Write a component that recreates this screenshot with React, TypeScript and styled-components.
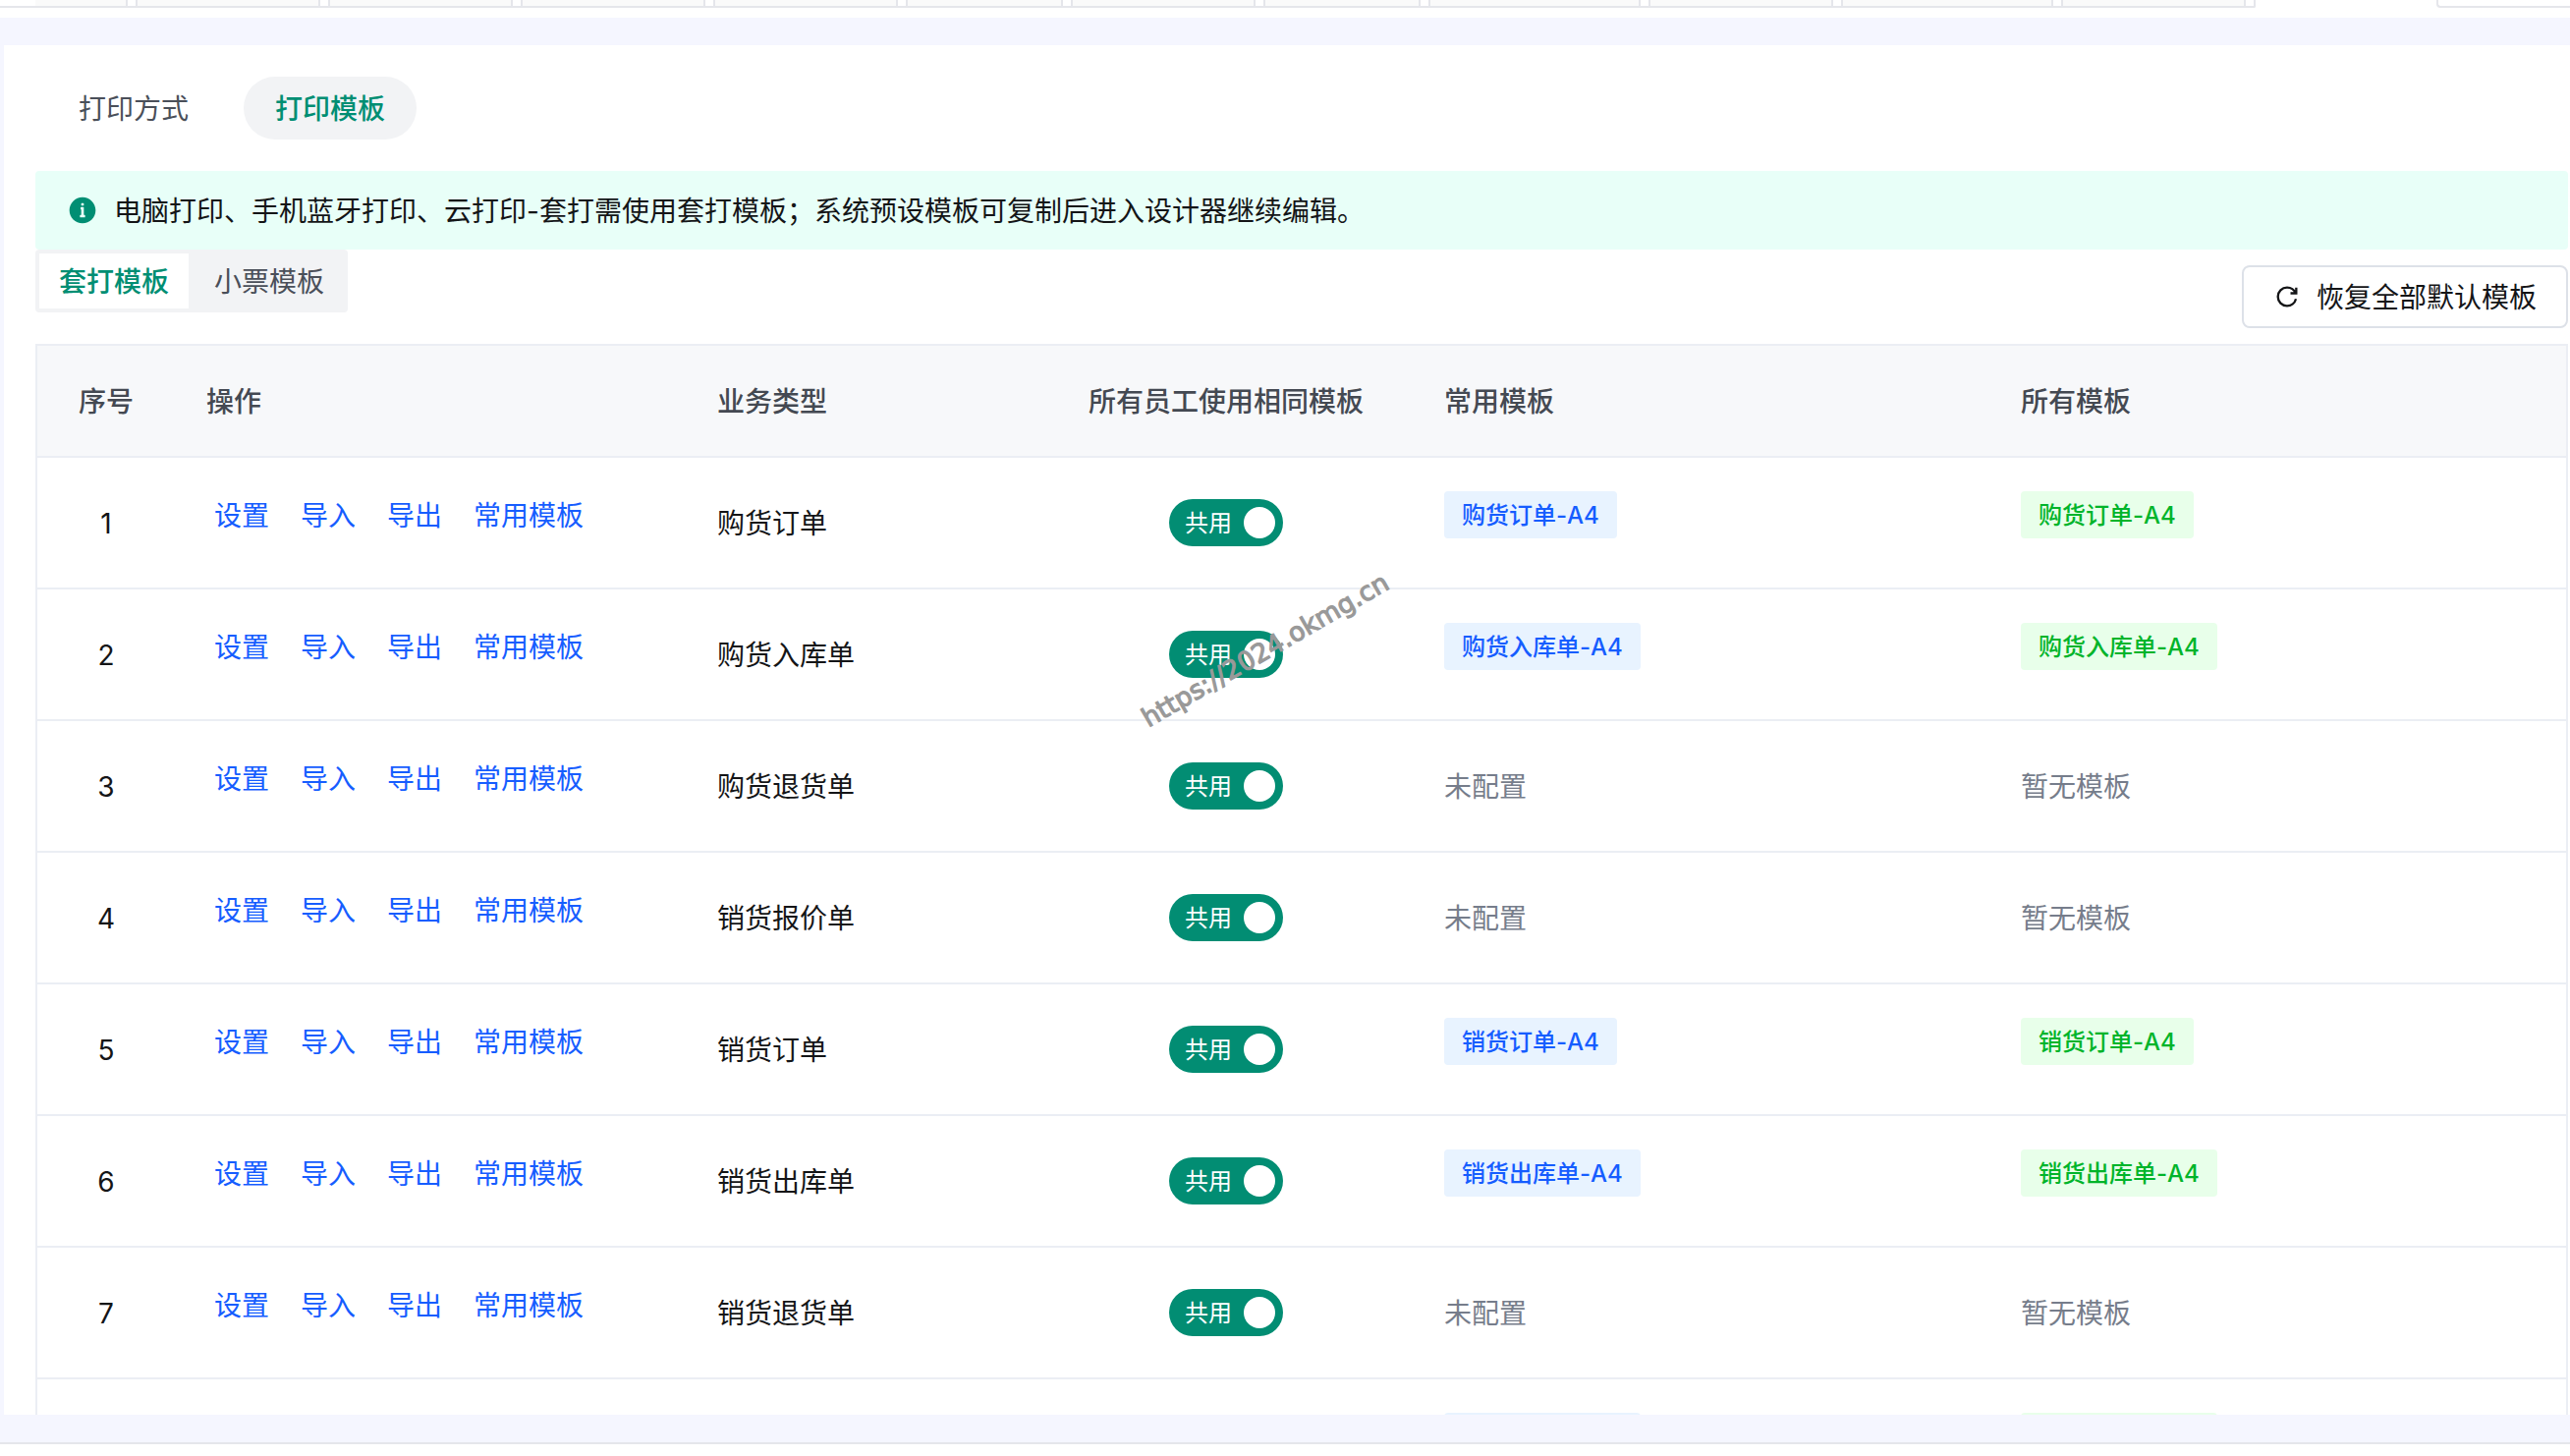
import React from "react";
import styled, { createGlobalStyle, css } from "styled-components";

const GlobalStyle = createGlobalStyle`
  * { box-sizing: border-box; }
  html, body { margin: 0; padding: 0; background: #fff; }
  body {
    font-family: Inter, "Noto Sans CJK SC", sans-serif;
    font-size: 28px;
    line-height: 44px;
    color: #141517;
    overflow: hidden;
  }
`;

const Page = styled.div`
  width: 2616px;
  height: 1482px;
  display: flex;
  flex-direction: column;
  overflow: hidden;
  background: #fff;
`;

const TopStrip = styled.div`
  height: 18px;
  flex: none;
  display: flex;
  align-items: flex-start;
`;

const TabBar = styled.div`
  width: 2296px;
  height: 8px;
  display: flex;
  gap: 8px;
  padding-left: 36px;
  border-bottom: 2px solid #e5e6eb;
  border-right: 2px solid #e5e6eb;
  border-bottom-right-radius: 2px;
`;

const OpenTab = styled.div<{ $width: number; $first?: boolean }>`
  width: ${(p) => p.$width}px;
  height: 6px;
  background: #fafafa;
  border-right: 2px solid #e5e6eb;
  border-left: ${(p) => (p.$first ? "none" : "2px solid #e5e6eb")};
`;

const TabTools = styled.div`
  margin-left: auto;
  width: 136px;
  height: 8px;
  border-left: 2px solid #e5e6eb;
  border-bottom: 2px solid #e5e6eb;
  border-bottom-left-radius: 4px;
`;

const Workspace = styled.main`
  height: 1450px;
  flex: none;
  padding: 28px 0 28px 4px;
  background: #f5f6ff;
`;

const Panel = styled.section`
  height: 1394px;
  overflow: hidden;
  background: #fff;
  padding: 32px 2px 0 32px;
`;

const PillTabs = styled.nav`
  display: flex;
  gap: 24px;
  padding-left: 12px;
`;

const Pill = styled.div<{ $active?: boolean }>`
  height: 64px;
  line-height: 66px;
  padding: 0 32px;
  border-radius: 32px;
  color: ${(p) => (p.$active ? "#008e73" : "#4a4f59")};
  font-weight: ${(p) => (p.$active ? 500 : 400)};
  background: ${(p) => (p.$active ? "#f2f3f5" : "transparent")};
`;

const Notice = styled.div`
  margin-top: 32px;
  height: 80px;
  padding: 0 32px;
  display: flex;
  align-items: center;
  gap: 16px;
  border-radius: 4px;
  background: #e8fff8;
`;

const Label = styled.span`
  padding-top: 2px;
`;

const Toolbar = styled.div`
  display: flex;
  align-items: flex-start;
  justify-content: space-between;
  height: 96px;
`;

const Segments = styled.div`
  display: flex;
  gap: 6px;
  height: 64px;
  padding: 4px;
  border-radius: 4px;
  background: #f2f3f5;
`;

const Segment = styled.div<{ $active?: boolean }>`
  height: 56px;
  line-height: 58px;
  padding: 0 20px;
  ${(p) =>
    p.$active
      ? css`
          color: #008e73;
          font-weight: 500;
          background: #fff;
        `
      : css`
          color: #4a4f59;
        `}
`;

const ResetButton = styled.button`
  margin: 16px 0 0;
  height: 64px;
  padding: 0 30px;
  display: flex;
  align-items: center;
  gap: 16px;
  border: 2px solid #dde1e8;
  border-radius: 8px;
  background: #fff;
  color: #141517;
  font: inherit;
`;

const Table = styled.div`
  border: 2px solid #ebeef4;
`;

const gridColumns = css`
  display: grid;
  grid-template-columns: 140px 520px 378px 394px 587px 1fr;
`;

const HeadRow = styled.div`
  ${gridColumns}
  height: 114px;
  align-items: center;
  background: #f7f8fa;
  border-bottom: 2px solid #ebeef4;
  color: #444952;
  font-weight: 500;
`;

const Row = styled.div`
  ${gridColumns}
  height: 134px;
  border-bottom: 2px solid #ebeef4;
`;

const Cell = styled.div<{ $center?: boolean; $indent?: number }>`
  display: flex;
  align-items: center;
  justify-content: ${(p) => (p.$center ? "center" : "flex-start")};
  padding-left: ${(p) => p.$indent ?? 0}px;
  white-space: nowrap;
`;

const TextCell = styled(Cell)`
  padding-top: 2px;
`;

const LinkCell = styled(Cell)`
  align-items: flex-start;
  gap: 32px;
  padding: 37px 0 0 40px;
`;

const ActionLink = styled.a`
  color: #165dff;
`;

const TagCell = styled(Cell)`
  align-items: flex-start;
  padding-top: 34px;
`;

const Tag = styled.span<{ $tone: "blue" | "green" }>`
  height: 48px;
  line-height: 50px;
  min-width: 176px;
  padding: 0 18px;
  border-radius: 4px;
  font-size: 24px;
  font-weight: 500;
  color: ${(p) => (p.$tone === "blue" ? "#165dff" : "#00b42a")};
  background: ${(p) => (p.$tone === "blue" ? "#e8f3ff" : "#e8ffea")};
`;

const TagPlaceholder = styled(Tag)`
  width: 200px;
`;

const Muted = styled.span`
  color: #767d8b;
`;

const Toggle = styled.div`
  width: 116px;
  height: 48px;
  padding: 0 8px 0 16px;
  display: flex;
  align-items: center;
  justify-content: space-between;
  border-radius: 24px;
  background: #028d73;
  color: #fff;
  font-size: 24px;
`;

const Knob = styled.span`
  width: 32px;
  height: 32px;
  border-radius: 50%;
  background: #fff;
`;

const Footer = styled.div`
  flex: 1;
  border-top: 2px solid #e5e6eb;
`;

const Watermark = styled.div`
  position: absolute;
  left: 1288px;
  top: 662px;
  transform: translate(-50%, -50%) rotate(-30deg);
  font-family: "DejaVu Sans", sans-serif;
  font-size: 26.5px;
  line-height: 1;
  color: #999;
  -webkit-text-stroke: 1.2px #999;
  white-space: nowrap;
`;

const InfoIcon = () => (
  <svg width="32" height="32" viewBox="0 0 48 48">
    <path
      fill="#008e73"
      fillRule="evenodd"
      d="M24 44c11.046 0 20-8.954 20-20S35.046 4 24 4 4 12.954 4 24s8.954 20 20 20Zm2-30a1 1 0 0 0-1-1h-2a1 1 0 0 0-1 1v2a1 1 0 0 0 1 1h2a1 1 0 0 0 1-1v-2Zm0 17h1a1 1 0 0 1 1 1v2a1 1 0 0 1-1 1h-6a1 1 0 0 1-1-1v-2a1 1 0 0 1 1-1h1v-8a1 1 0 0 1-1-1v-2a1 1 0 0 1 1-1h3a1 1 0 0 1 1 1v11Z"
    />
  </svg>
);

const RefreshIcon = () => (
  <svg width="28" height="28" viewBox="0 0 48 48" fill="none" stroke="currentColor" strokeWidth="4">
    <path d="M38.837 18C36.463 12.136 30.715 8 24 8 15.163 8 8 15.163 8 24s7.163 16 16 16c7.455 0 13.72-5.1 15.496-12M40 8v10H30" />
  </svg>
);

const openTabs = [94, 188, 188, 188, 188, 160, 188, 160, 216, 188, 216, 188];
const actions = ["设置", "导入", "导出", "常用模板"];
const rows = [
  { type: "购货订单", template: true },
  { type: "购货入库单", template: true },
  { type: "购货退货单", template: false },
  { type: "销货报价单", template: false },
  { type: "销货订单", template: true },
  { type: "销货出库单", template: true },
  { type: "销货退货单", template: false },
];

export default function App() {
  return (
    <Page>
      <GlobalStyle />
      <TopStrip>
        <TabBar>
          {openTabs.map((width, i) => (
            <OpenTab key={i} $width={width} $first={i === 0} />
          ))}
        </TabBar>
        <TabTools />
      </TopStrip>
      <Workspace>
        <Panel>
          <PillTabs>
            <Pill>打印方式</Pill>
            <Pill $active>打印模板</Pill>
          </PillTabs>
          <Notice>
            <InfoIcon />
            <Label>
              电脑打印、手机蓝牙打印、云打印-套打需使用套打模板；系统预设模板可复制后进入设计器继续编辑。
            </Label>
          </Notice>
          <Toolbar>
            <Segments>
              <Segment $active>套打模板</Segment>
              <Segment>小票模板</Segment>
            </Segments>
            <ResetButton>
              <RefreshIcon />
              <Label>恢复全部默认模板</Label>
            </ResetButton>
          </Toolbar>
          <Table>
            <HeadRow>
              <TextCell $center>序号</TextCell>
              <TextCell $indent={32}>操作</TextCell>
              <TextCell $indent={32}>业务类型</TextCell>
              <TextCell $indent={32}>所有员工使用相同模板</TextCell>
              <TextCell>常用模板</TextCell>
              <TextCell>所有模板</TextCell>
            </HeadRow>
            {rows.map((row, i) => (
              <Row key={row.type}>
                <TextCell $center>{i + 1}</TextCell>
                <LinkCell>
                  {actions.map((label) => (
                    <ActionLink key={label}>{label}</ActionLink>
                  ))}
                </LinkCell>
                <TextCell $indent={32}>{row.type}</TextCell>
                <Cell $indent={114}>
                  <Toggle>
                    <Label>共用</Label>
                    <Knob />
                  </Toggle>
                </Cell>
                {row.template ? (
                  <>
                    <TagCell>
                      <Tag $tone="blue">{row.type}-A4</Tag>
                    </TagCell>
                    <TagCell>
                      <Tag $tone="green">{row.type}-A4</Tag>
                    </TagCell>
                  </>
                ) : (
                  <>
                    <TextCell>
                      <Muted>未配置</Muted>
                    </TextCell>
                    <TextCell>
                      <Muted>暂无模板</Muted>
                    </TextCell>
                  </>
                )}
              </Row>
            ))}
            <Row>
              <Cell />
              <Cell />
              <Cell />
              <Cell />
              <TagCell>
                <TagPlaceholder $tone="blue" />
              </TagCell>
              <TagCell>
                <TagPlaceholder $tone="green" />
              </TagCell>
            </Row>
          </Table>
        </Panel>
      </Workspace>
      <Footer />
      <Watermark>https://2024.okmg.cn</Watermark>
    </Page>
  );
}
